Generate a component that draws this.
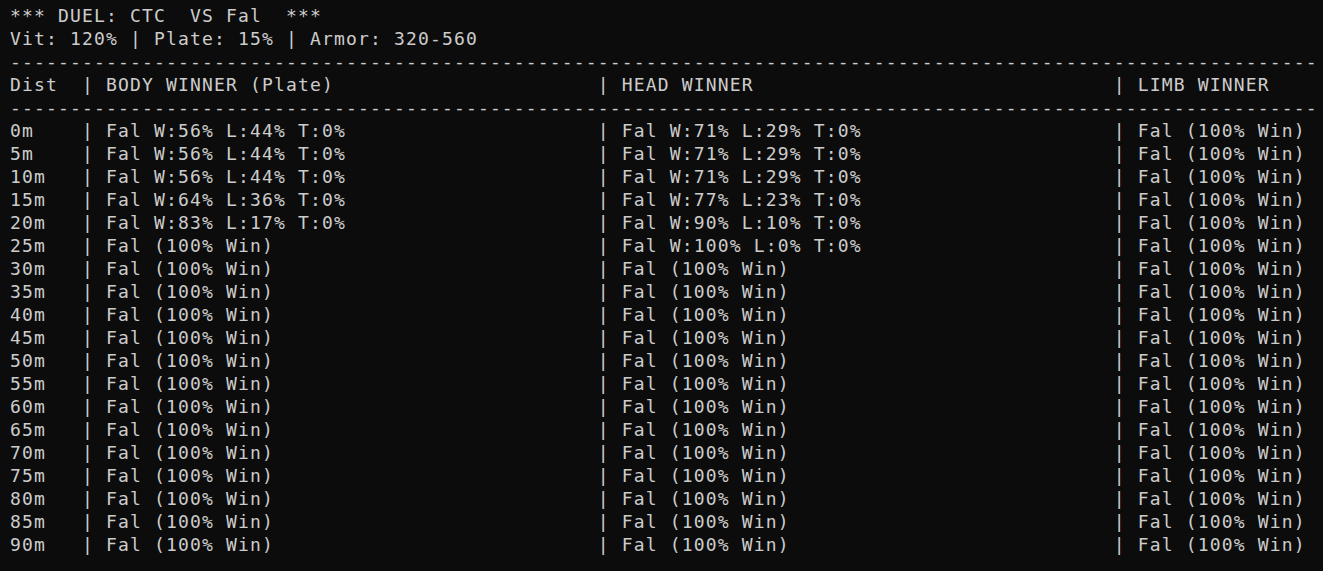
const rows: [string, string, string, string][] = [
  ["0m", "Fal W:56% L:44% T:0%", "Fal W:71% L:29% T:0%", "Fal (100% Win)"],
  ["5m", "Fal W:56% L:44% T:0%", "Fal W:71% L:29% T:0%", "Fal (100% Win)"],
  ["10m", "Fal W:56% L:44% T:0%", "Fal W:71% L:29% T:0%", "Fal (100% Win)"],
  ["15m", "Fal W:64% L:36% T:0%", "Fal W:77% L:23% T:0%", "Fal (100% Win)"],
  ["20m", "Fal W:83% L:17% T:0%", "Fal W:90% L:10% T:0%", "Fal (100% Win)"],
  ["25m", "Fal (100% Win)", "Fal W:100% L:0% T:0%", "Fal (100% Win)"],
];

for (let d = 30; d <= 90; d += 5) {
  rows.push([`${d}m`, "Fal (100% Win)", "Fal (100% Win)", "Fal (100% Win)"]);
}

const line = (c: [string, string, string, string]) =>
  `${c[0].padEnd(6)}| ${c[1].padEnd(40)} | ${c[2].padEnd(40)} | ${c[3]}`;

// fills the window width, terminal-style
const dashes = "-".repeat(109);

export default function App() {
  const lines = [
    "*** DUEL: CTC  VS Fal  ***",
    "Vit: 120% | Plate: 15% | Armor: 320-560",
    dashes,
    line(["Dist", "BODY WINNER (Plate)", "HEAD WINNER", "LIMB WINNER"]),
    dashes,
    ...rows.map(line),
  ];

  return (
    <div className="w-[1323px] h-[571px] overflow-hidden bg-[#0c0c0c] text-[#cccccc] pt-[4px] pl-[10px] font-['DejaVu_Sans_Mono',monospace] text-[18px] leading-[23px] tracking-[1.16px]">
      {lines.map((l, i) => (
        <div key={i} className="whitespace-pre">
          {l}
        </div>
      ))}
    </div>
  );
}
